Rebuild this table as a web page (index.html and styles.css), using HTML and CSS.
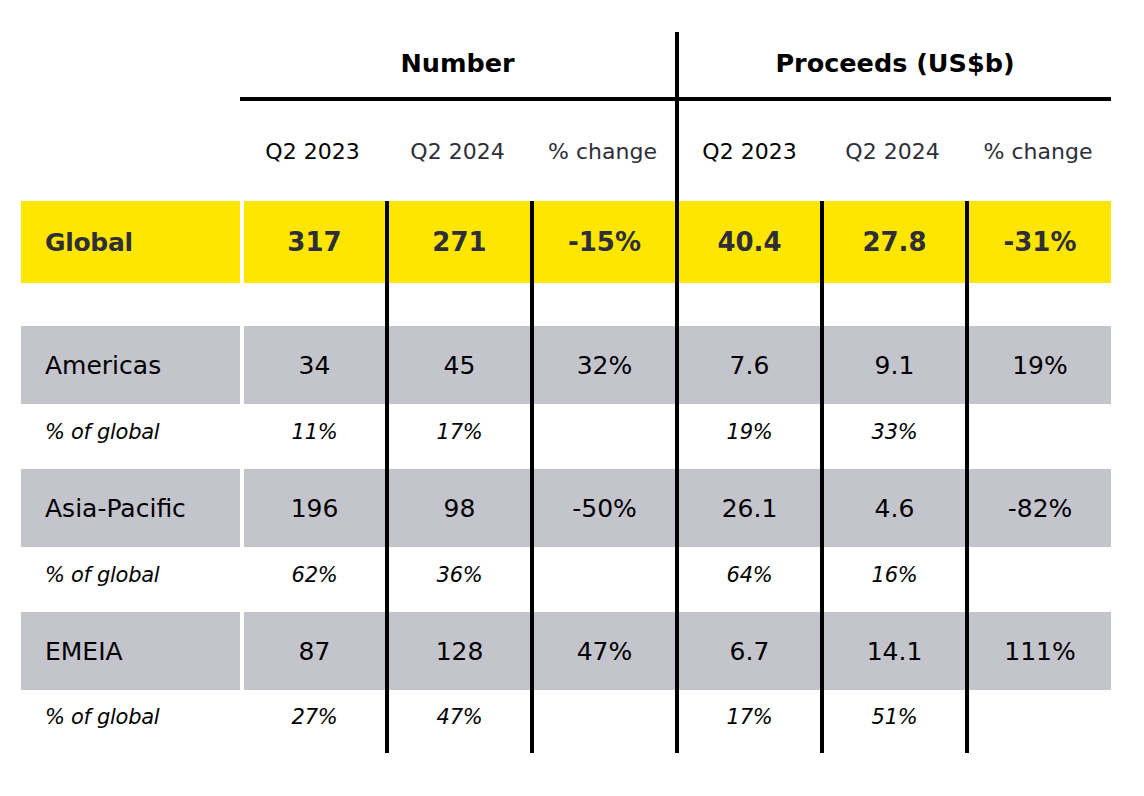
FILE: index.html
```html
<!DOCTYPE html>
<html>
<head>
<meta charset="utf-8">
<link rel="stylesheet" href="styles.css">
</head>
<body>
<div class="tbl">
  <div class="c"></div>
  <div class="c h1">Number</div>
  <div class="c h1 line">Proceeds (US$b)</div>

  <div class="c sub"></div>
  <div class="c sub">Q2 2023</div>
  <div class="c sub soft">Q2 2024</div>
  <div class="c sub soft">% change</div>
  <div class="c sub line">Q2 2023</div>
  <div class="c sub soft">Q2 2024</div>
  <div class="c sub soft">% change</div>

  <div class="c lab y glob">Global</div>
  <div class="c y num first">317</div>
  <div class="c y num line">271</div>
  <div class="c y num line">-15%</div>
  <div class="c y num line">40.4</div>
  <div class="c y num line">27.8</div>
  <div class="c y num line">-31%</div>

  <div class="c"></div>
  <div class="c first"></div>
  <div class="c line"></div>
  <div class="c line"></div>
  <div class="c line"></div>
  <div class="c line"></div>
  <div class="c line"></div>

  <div class="c lab g">Americas</div>
  <div class="c g first">34</div>
  <div class="c g line">45</div>
  <div class="c g line">32%</div>
  <div class="c g line">7.6</div>
  <div class="c g line">9.1</div>
  <div class="c g line">19%</div>

  <div class="c lab it">% of global</div>
  <div class="c it first">11%</div>
  <div class="c it line">17%</div>
  <div class="c it line"></div>
  <div class="c it line">19%</div>
  <div class="c it line">33%</div>
  <div class="c it line"></div>

  <div class="c lab g">Asia-Pacific</div>
  <div class="c g first">196</div>
  <div class="c g line">98</div>
  <div class="c g line">-50%</div>
  <div class="c g line">26.1</div>
  <div class="c g line">4.6</div>
  <div class="c g line">-82%</div>

  <div class="c lab it">% of global</div>
  <div class="c it first">62%</div>
  <div class="c it line">36%</div>
  <div class="c it line"></div>
  <div class="c it line">64%</div>
  <div class="c it line">16%</div>
  <div class="c it line"></div>

  <div class="c lab g">EMEIA</div>
  <div class="c g first">87</div>
  <div class="c g line">128</div>
  <div class="c g line">47%</div>
  <div class="c g line">6.7</div>
  <div class="c g line">14.1</div>
  <div class="c g line">111%</div>

  <div class="c lab it">% of global</div>
  <div class="c it first">27%</div>
  <div class="c it line">47%</div>
  <div class="c it line"></div>
  <div class="c it line">17%</div>
  <div class="c it line">51%</div>
  <div class="c it line"></div>
</div>
</body>
</html>
```

FILE: styles.css
```css
* { box-sizing: border-box; }
html, body { margin: 0; padding: 0; background: #fff; }
body {
  font-family: "DejaVu Sans", "Noto Sans", sans-serif;
  color: #000;
  width: 1144px;
  height: 796px;
  overflow: hidden;
}
.tbl {
  margin: 32px 0 0 21px;
  display: grid;
  grid-template-columns: 219px 145px 145px 145px 145px 145px 146px;
  grid-template-rows: 69px 100px 82px 43px 78px 65px 78px 65px 78px 63px;
}
.c {
  display: flex;
  align-items: center;
  justify-content: center;
  font-size: 25px;
  line-height: 1;
}
.first { border-left: 4px solid #fff; }
.line { border-left: 4px solid #000; }
.h1 {
  grid-column: span 3;
  font-weight: 700;
  font-size: 25.5px;
  border-bottom: 4px solid #000;
  padding-bottom: 2px;
}
.sub { font-size: 22px; padding-top: 2px; }
.soft { color: #2e2e38; }
.lab { justify-content: flex-start; padding-left: 24px; }
.y { background: #ffe600; color: #2e2e38; font-weight: 700; }
.glob { font-size: 25px; letter-spacing: -0.3px; }
.num { font-size: 26px; }
.g { background: #c4c4cd; }
.it {
  font-style: italic;
  font-size: 21px;
  letter-spacing: -0.3px;
  padding-bottom: 8px;
}
```
